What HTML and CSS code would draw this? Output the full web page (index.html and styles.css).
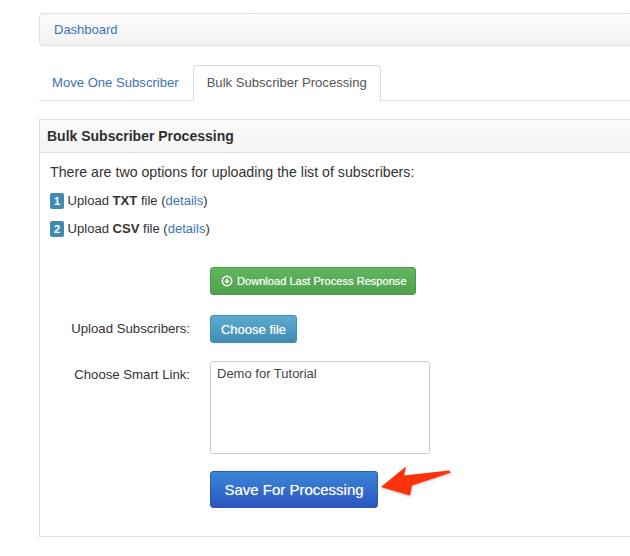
FILE: index.html
```html
<!DOCTYPE html>
<html lang="en">
<head>
    <meta charset="UTF-8">
    <meta name="viewport" content="width=device-width, initial-scale=1.0">
    <title>Bulk Subscriber Processing</title>
    <link rel="stylesheet" href="styles.css">
</head>
<body>
    <div class="page">
        <div class="breadcrumb"><a href="#">Dashboard</a></div>

        <ul class="tabs">
            <li><a href="#">Move One Subscriber</a></li>
            <li class="active"><a href="#">Bulk Subscriber Processing</a></li>
        </ul>

        <div class="panel">
            <div class="panel-heading">Bulk Subscriber Processing</div>
            <div class="panel-body">
                <p class="intro">There are two options for uploading the list of subscribers:</p>
                <p class="option"><span class="badge">1</span> Upload <strong>TXT</strong> file (<a href="#">details</a>)</p>
                <p class="option"><span class="badge">2</span> Upload <strong>CSV</strong> file (<a href="#">details</a>)</p>

                <form class="form">
                    <div class="form-row row-download">
                        <span class="label"></span>
                        <button type="button" class="btn btn-green">
                            <svg class="icon" viewBox="0 0 12 12" width="12" height="12">
                                <circle cx="6" cy="6" r="4.7" fill="none" stroke="#fff" stroke-width="1.5"/>
                                <path d="M6 3.2v4M4.2 5.7L6 7.7l1.8-2" fill="none" stroke="#fff" stroke-width="1.4"/>
                            </svg>
                            Download Last Process Response
                        </button>
                    </div>
                    <div class="form-row row-upload">
                        <span class="label">Upload Subscribers:</span>
                        <button type="button" class="btn btn-teal">Choose file</button>
                    </div>
                    <div class="form-row row-link">
                        <span class="label">Choose Smart Link:</span>
                        <div class="select-box">Demo for Tutorial</div>
                    </div>
                    <div class="form-row row-save">
                        <span class="label"></span>
                        <button type="button" class="btn btn-blue">Save For Processing</button>
                    </div>
                </form>
            </div>

            <svg class="arrow" viewBox="0 0 76 34" width="76" height="34">
                <defs>
                    <filter id="arrow-shadow" x="-10%" y="-10%" width="120%" height="130%">
                        <feDropShadow dx="0" dy="1" stdDeviation="0.8" flood-color="#000" flood-opacity="0.3"/>
                    </filter>
                </defs>
                <path d="M2 22L27 1.500L25 10.500L70 5.500L72 7.500L33 20.500L31 30.500Z" fill="#fc3208" filter="url(#arrow-shadow)"/>
            </svg>
        </div>
    </div>
</body>
</html>
```

FILE: styles.css
```css
body {
    margin: 0;
    font-family: "Liberation Sans", Arial, sans-serif;
    font-size: 13px;
    color: #333;
    background-color: #fff;
    overflow: hidden;
}
a {
    color: #3b73b9;
    text-decoration: none;
}
.page {
    width: 680px;
    padding: 13px 0 0 39px;
}
.breadcrumb {
    height: 31px;
    line-height: 31px;
    padding-left: 14px;
    border: 1px solid #e0e0e0;
    border-radius: 4px;
    background: linear-gradient(to bottom, #fbfbfb, #f3f3f3);
}
.tabs {
    display: flex;
    list-style: none;
    height: 35px;
    margin: 19px 0 18px;
    padding: 0;
    border-bottom: 1px solid #ddd;
    font-size: 13.1px;
}
.tabs li {
    height: 36px;
}
.tabs a {
    display: block;
    line-height: 34px;
    padding: 0 13px 0 12px;
    border: 1px solid transparent;
    border-bottom: 0;
}
.tabs .active a {
    color: #555;
    height: 35px;
    padding: 0 13px;
    background: #fff;
    border-color: #ddd;
    border-radius: 4px 4px 0 0;
}
.panel {
    position: relative;
    height: 416px;
    border: 1px solid #ddd;
}
.panel-heading {
    height: 32px;
    line-height: 32px;
    padding-left: 7px;
    font-size: 14px;
    font-weight: bold;
    color: #2f2f2f;
    border-bottom: 1px solid #ddd;
    background: linear-gradient(to bottom, #fbfbfb, #f4f4f4);
}
.panel-body {
    padding: 11px 10px 0;
}
.panel-body p {
    margin: 0;
}
.panel-body .intro {
    font-size: 14.2px;
    line-height: 17px;
    margin-bottom: 11px;
}
.panel-body .option {
    font-size: 13.05px;
    line-height: 17px;
    margin-bottom: 11px;
}
.badge {
    display: inline-block;
    width: 14px;
    height: 16px;
    line-height: 16px;
    border-radius: 2px;
    background-color: #428bb0;
    color: #fff;
    font-size: 11px;
    font-weight: bold;
    text-align: center;
}
.form {
    margin-top: 30px;
}
.form-row {
    display: grid;
    grid-template-columns: 140px auto;
    justify-content: start;
    column-gap: 20px;
}
.label {
    text-align: right;
    font-size: 13.2px;
    line-height: 28px;
}
.row-upload {
    margin-top: 20px;
}
.row-link {
    margin-top: 18px;
}
.row-save {
    margin-top: 17px;
}
.btn {
    font-family: inherit;
    color: #fff;
    border-radius: 3px;
    cursor: pointer;
    text-shadow: 0 0 1px rgba(255, 255, 255, 0.5);
}
.btn-green {
    display: flex;
    align-items: center;
    gap: 4px;
    width: 206px;
    height: 28px;
    padding: 0 0 0 10px;
    font-size: 11.1px;
    border: 1px solid #4a9a4a;
    background: linear-gradient(to bottom, #62b65f, #4fa14d);
}
.btn-teal {
    width: 87px;
    height: 28px;
    padding: 0;
    font-size: 13px;
    font-weight: normal;
    border: 1px solid #3f8fb3;
    background: linear-gradient(to bottom, #5dabcf, #3f8db4);
}
.btn-blue {
    width: 168px;
    height: 37px;
    padding: 0;
    font-size: 15px;
    border: 1px solid #2a5cb5;
    background: linear-gradient(to bottom, #3a86d8, #2c55c0);
}
.icon {
    flex: none;
}
.select-box {
    box-sizing: border-box;
    width: 220px;
    height: 93px;
    padding: 4px 6px;
    font-size: 13px;
    line-height: 16px;
    color: #444;
    border: 1px solid #ccc;
    border-radius: 3px;
}
.arrow {
    position: absolute;
    left: 339px;
    top: 345px;
}
```
